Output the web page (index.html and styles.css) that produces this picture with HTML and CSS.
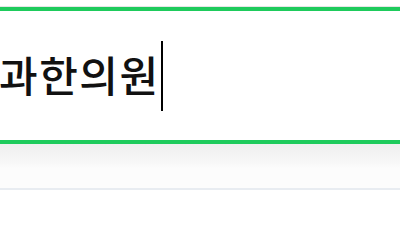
FILE: index.html
```html
<!DOCTYPE html>
<html lang="ko">
<head>
<meta charset="utf-8">
<link rel="stylesheet" href="styles.css">
</head>
<body>
<div class="page">
  <div class="topline"></div>
  <div class="search">
    <div class="field">
      <span class="value">과한의원</span><span class="caret"></span>
    </div>
  </div>
  <div class="shade"></div>
  <div class="divider"></div>
</div>
</body>
</html>
```
FILE: styles.css
```css
html, body {
  margin: 0;
  padding: 0;
  background: #ffffff;
}
.page {
  width: 400px;
  height: 225px;
  overflow: hidden;
  display: flex;
  flex-direction: column;
}
.topline {
  height: 7px;
  border-bottom: 1px solid #e6e6e6;
  box-sizing: border-box;
}
.search {
  border-top: 4px solid #1ecb5c;
  border-bottom: 4px solid #1ecb5c;
  height: 129px;
  display: flex;
  align-items: center;
  background: #fff;
}
.field {
  display: flex;
  align-items: center;
  margin-left: -1px;
}
.value {
  font-family: "Noto Sans CJK KR", "Noto Sans", sans-serif;
  font-size: 42px;
  font-weight: 500;
  color: #111;
  letter-spacing: 1.5px;
  line-height: 1;
  padding-bottom: 3px;
}
.caret {
  width: 2px;
  height: 70px;
  background: #000;
  margin-left: 1px;
}
.shade {
  height: 44px;
  background: linear-gradient(#efefef 0px, #f7f7f7 18px, #fcfcfc 24px, #fcfcfc 44px);
}
.divider {
  height: 2px;
  background: #e8ecf1;
}
```
